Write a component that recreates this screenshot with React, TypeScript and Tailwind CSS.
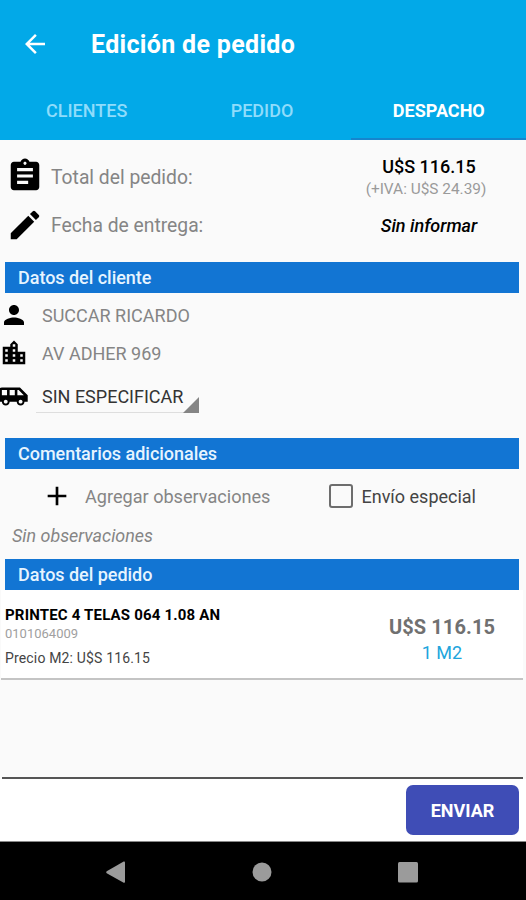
import type { ReactNode } from "react";
import {
  MdAdd,
  MdAirportShuttle,
  MdArrowBack,
  MdAssignment,
  MdEdit,
  MdLocationCity,
  MdPerson,
} from "react-icons/md";

const TABS = ["CLIENTES", "PEDIDO", "DESPACHO"];

function SectionBar({ children }: { children: ReactNode }) {
  return (
    <h2 className="ml-[5px] mr-[7px] h-[31px] shrink-0 bg-[#1275d3] pl-[13px] text-[18px] font-medium leading-[32px] tracking-[-0.03px] text-[#e6f4ff]">
      {children}
    </h2>
  );
}

export default function App() {
  return (
    <div className="flex h-[900px] w-[526px] flex-col overflow-hidden whitespace-nowrap bg-[#fafafa] font-['Roboto',sans-serif]">
      {/* App bar */}
      <header className="flex h-[140px] shrink-0 flex-col bg-[#02a9e8] text-white">
        <div className="flex h-[88px] items-center pl-[20px]">
          <MdArrowBack size={30} />
          <h1 className="ml-[41px] pt-px text-[25px] font-bold leading-none tracking-[0.32px]">Edición de pedido</h1>
        </div>
        <nav className="grid flex-1 grid-cols-3">
          {TABS.map((tab) => (
            <button
              key={tab}
              className={`border-b-2 pb-[5px] text-[18px] ${
                tab === "DESPACHO"
                  ? "border-[#1685cd] pl-px font-bold text-white"
                  : "border-transparent pr-[2px] font-medium text-[#8fdcfb]"
              }`}
            >
              {tab}
            </button>
          ))}
        </nav>
      </header>

      {/* Summary */}
      <section className="flex h-[122px] shrink-0 flex-col pt-[12px] text-[#858585]">
        <div className="flex h-[48px] items-center">
          <MdAssignment size={38} className="ml-[6px] text-black" />
          <span className="ml-[7px] flex-1 pt-[4px] text-[19.3px]">Total del pedido:</span>
          <div className="mr-[25px] w-[150px] pt-[3px] text-center">
            <p className="pl-[6px] text-[18px] font-medium leading-[22px] text-black">U$S 116.15</p>
            <p className="text-[15.4px] leading-[22px] text-[#9a9a9a]">(+IVA: U$S 24.39)</p>
          </div>
        </div>
        <div className="flex h-[50px] items-center">
          <MdEdit size={38} className="ml-[6px] text-black" />
          <span className="ml-[7px] flex-1 pt-[2px] text-[19.3px]">Fecha de entrega:</span>
          <span className="mr-[22px] w-[150px] text-center text-[18px] font-medium italic text-black">
            Sin informar
          </span>
        </div>
      </section>

      <SectionBar>Datos del cliente</SectionBar>
      <section className="flex h-[145px] shrink-0 flex-col pt-[3px] text-[18px] text-[#858585]">
        <div className="flex h-[38px] items-center">
          <MdPerson size={30} className="-ml-px text-black" />
          <span className="ml-[13px]">SUCCAR RICARDO</span>
        </div>
        <div className="flex h-[38px] items-center">
          <MdLocationCity size={30} className="-ml-px text-black" />
          <span className="ml-[13px]">AV ADHER 969</span>
        </div>
        <div className="flex h-[48px] items-center">
          <MdAirportShuttle size={31} className="-ml-[2px] text-black" />
          <div className="ml-[7px] mt-[2px] flex h-[32px] w-[163px] items-end justify-between border-b border-[#dedede] pl-[6px] text-[#333]">
            <span className="pb-[2px]">SIN ESPECIFICAR</span>
            <svg viewBox="0 0 16 16" className="-mb-px h-[16px] w-[16px] shrink-0 fill-[#858585]">
              <path d="M16 0v16H0z" />
            </svg>
          </div>
        </div>
      </section>

      <SectionBar>Comentarios adicionales</SectionBar>
      <section className="flex h-[90px] shrink-0 flex-col text-[#858585]">
        <div className="flex h-[54px] items-center">
          <MdAdd size={32} className="ml-[41px] text-black" />
          <span className="ml-[12px] pt-px text-[18.1px]">Agregar observaciones</span>
          <label className="ml-auto mr-[50px] flex items-center gap-[8px] text-[18px] text-[#444]">
            <span className="h-[24px] w-[24px] rounded-[3px] border-2 border-[#6d6d6d]" />
            Envío especial
          </label>
        </div>
        <p className="pl-[12px] pt-px text-[17.9px] italic leading-[24px]">Sin observaciones</p>
      </section>

      <SectionBar>Datos del pedido</SectionBar>
      <article className="ml-px mr-[3px] flex h-[90px] shrink-0 justify-between border-b-2 border-[#c4c4c4] bg-white pl-[4px]">
        <div className="pt-[15px]">
          <h3 className="text-[15px] font-bold leading-[20px] tracking-[0.18px] text-black">
            PRINTEC 4 TELAS 064 1.08 AN
          </h3>
          <p className="text-[13px] leading-[18px] text-[#a0a0a0]">0101064009</p>
          <p className="mt-[5px] text-[14px] leading-[20px] tracking-[0.16px] text-[#444]">Precio M2: U$S 116.15</p>
        </div>
        <div className="mr-[6px] w-[150px] pt-[24px] text-center">
          <p className="text-[20px] font-bold leading-[26px] tracking-[0.1px] text-[#707070]">U$S 116.15</p>
          <p className="text-[18px] leading-[26px] text-[#21a5dc]">1 M2</p>
        </div>
      </article>

      <div className="ml-[2px] mr-[3px] flex-1 border-b-2 border-[#555]" />
      <footer className="flex h-[63px] shrink-0 items-start justify-end border-b border-[#888] bg-white pr-[7px] pt-[6px]">
        <button className="h-[50px] w-[113px] rounded-[7px] bg-[#3f4db6] text-[18px] font-bold text-white">
          ENVIAR
        </button>
      </footer>

      {/* Android navigation */}
      <nav className="h-[58px] shrink-0 bg-black">
        <svg viewBox="0 0 526 58" className="h-[58px] w-[526px] fill-[#9b9b9b]">
          <path d="M106.700 29.200 123.700 19.600Q125 19.200 125 20.500V39.500Q125 41.300 123.700 40.700L106.700 31.200Q105.500 30.200 106.700 29.200Z" />
          <circle cx="262" cy="30" r="9.500" />
          <rect x="398" y="20" width="20" height="20.500" rx="1.500" />
        </svg>
      </nav>
    </div>
  );
}
